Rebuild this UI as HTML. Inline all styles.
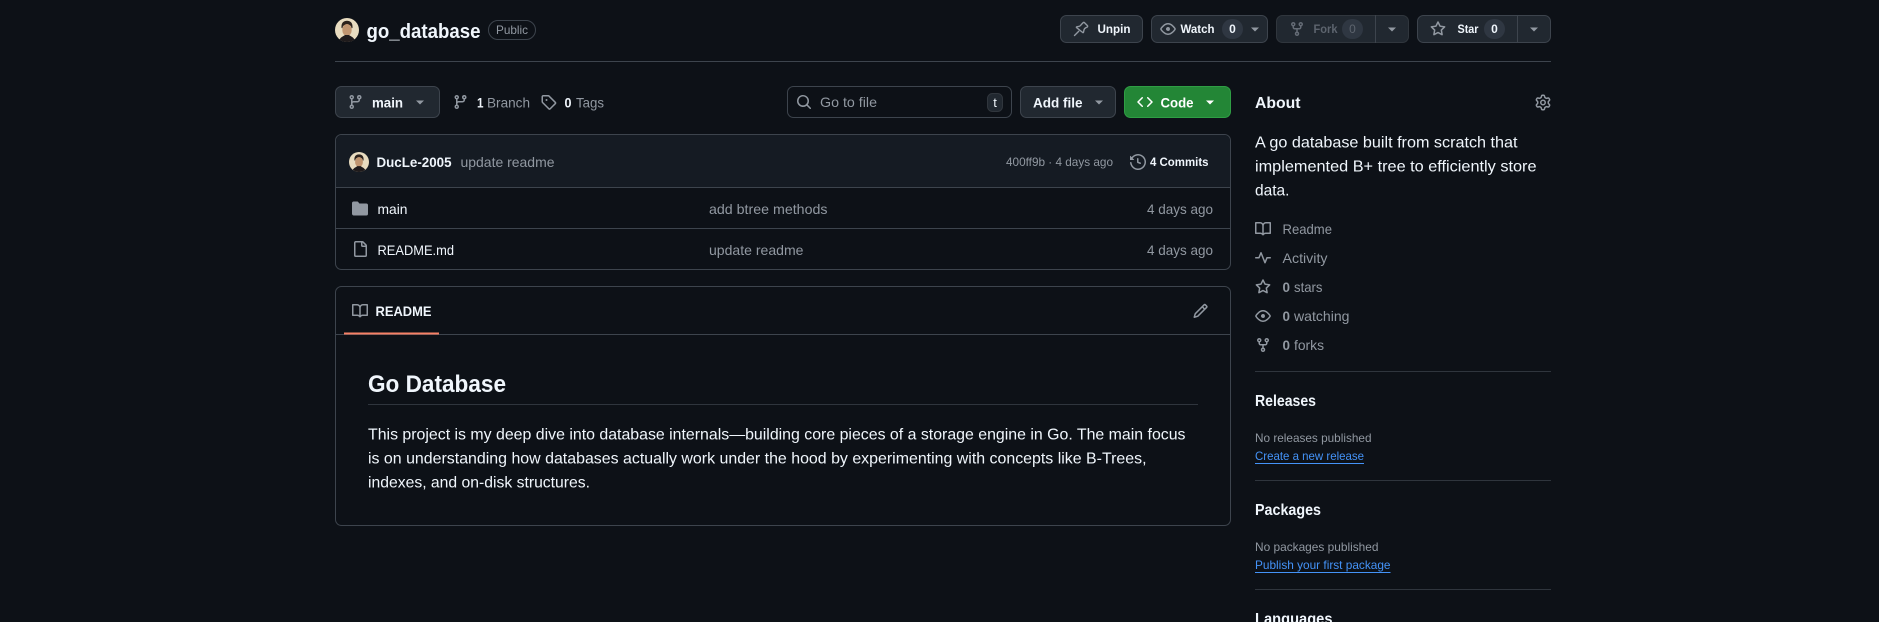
<!DOCTYPE html>
<html><head><meta charset="utf-8"><title>go_database</title>
<style>
html,body{margin:0;padding:0;background:#0d1117;width:1879px;height:622px;overflow:hidden}
svg{display:block}
text{font-family:"Liberation Sans",sans-serif;font-size:14px;fill:#f0f6fc}
.b{font-weight:700}
.m{fill:#9198a1}
.s{font-size:12px}
.l{fill:#4493f8}
.i{fill:#9198a1}
.btn{fill:#212830;stroke:#3d444d}
.pill{fill:#2f3742}
.car{fill:#9198a1}
.hr{fill:#2f353d}
</style></head><body>
<svg xmlns="http://www.w3.org/2000/svg" width="1879" height="622" viewBox="0 0 1879 622">
<defs>
<path id="branch" d="M9.5 3.25a2.25 2.25 0 1 1 3 2.122V6A2.5 2.5 0 0 1 10 8.5H6a1 1 0 0 0-1 1v1.128a2.251 2.251 0 1 1-1.5 0V5.372a2.25 2.25 0 1 1 1.5 0v1.836A2.493 2.493 0 0 1 6 7h4a1 1 0 0 0 1-1v-.628A2.25 2.25 0 0 1 9.5 3.25Zm-6 0a.75.75 0 1 0 1.5 0 .75.75 0 0 0-1.5 0Zm8.25-.75a.75.75 0 1 0 0 1.5.75.75 0 0 0 0-1.5ZM4.25 12a.75.75 0 1 0 0 1.5.75.75 0 0 0 0-1.5Z"/>
<path id="eye" d="M8 2c1.981 0 3.671.992 4.933 2.078 1.27 1.091 2.187 2.345 2.637 3.023a1.62 1.62 0 0 1 0 1.798c-.45.678-1.367 1.932-2.637 3.023C11.67 13.008 9.981 14 8 14c-1.981 0-3.671-.992-4.933-2.078C1.797 10.83.88 9.576.43 8.898a1.62 1.62 0 0 1 0-1.798c.45-.677 1.367-1.931 2.637-3.022C4.33 2.992 6.019 2 8 2ZM1.679 7.932a.12.12 0 0 0 0 .136c.411.622 1.241 1.75 2.366 2.717C5.176 11.758 6.527 12.5 8 12.5c1.473 0 2.825-.742 3.955-1.715 1.124-.967 1.954-2.096 2.366-2.717a.12.12 0 0 0 0-.136c-.412-.621-1.242-1.75-2.366-2.717C10.824 4.242 9.473 3.5 8 3.5c-1.473 0-2.825.742-3.955 1.715-1.124.967-1.954 2.096-2.366 2.717ZM8 10a2 2 0 1 1-.001-3.999A2 2 0 0 1 8 10Z"/>
<path id="fork" d="M5 5.372v.878c0 .414.336.75.75.75h4.5a.75.75 0 0 0 .75-.75v-.878a2.25 2.25 0 1 1 1.5 0v.878a2.25 2.25 0 0 1-2.25 2.25h-1.5v2.128a2.251 2.251 0 1 1-1.5 0V8.5h-1.5A2.25 2.25 0 0 1 3.5 6.25v-.878a2.25 2.25 0 1 1 1.5 0ZM5 3.25a.75.75 0 1 0-1.5 0 .75.75 0 0 0 1.5 0Zm6.75.75a.75.75 0 1 0 0-1.5.75.75 0 0 0 0 1.5Zm-3 8.75a.75.75 0 1 0-1.5 0 .75.75 0 0 0 1.5 0Z"/>
<path id="star" d="M8 .25a.75.75 0 0 1 .673.418l1.882 3.815 4.21.612a.75.75 0 0 1 .416 1.279l-3.046 2.97.719 4.192a.751.751 0 0 1-1.088.791L8 12.347l-3.766 1.98a.75.75 0 0 1-1.088-.79l.72-4.194L.818 6.374a.75.75 0 0 1 .416-1.28l4.21-.611L7.327.668A.75.75 0 0 1 8 .25Zm0 2.445L6.615 5.5a.75.75 0 0 1-.564.41l-3.097.45 2.24 2.184a.75.75 0 0 1 .216.664l-.528 3.084 2.769-1.456a.75.75 0 0 1 .698 0l2.77 1.456-.53-3.084a.75.75 0 0 1 .216-.664l2.24-2.183-3.096-.45a.75.75 0 0 1-.564-.41L8 2.694Z"/>
<path id="book" d="M0 1.75A.75.75 0 0 1 .75 1h4.253c1.227 0 2.317.59 3 1.501A3.743 3.743 0 0 1 11.006 1h4.245a.75.75 0 0 1 .75.75v10.5a.75.75 0 0 1-.75.75h-4.507a2.25 2.25 0 0 0-1.591.659l-.622.621a.75.75 0 0 1-1.06 0l-.622-.621A2.25 2.25 0 0 0 5.258 13H.75a.75.75 0 0 1-.75-.75Zm7.251 10.324.004-5.073-.002-2.253A2.25 2.25 0 0 0 5.003 2.5H1.5v9h3.757a3.75 3.75 0 0 1 1.994.574ZM8.755 4.75l-.004 7.322a3.752 3.752 0 0 1 1.992-.572H14.5v-9h-3.495a2.25 2.25 0 0 0-2.25 2.25Z"/>
<g id="ava"><circle cx="12" cy="12" r="12" fill="#e8dcc0"/><path d="M6.5 10C6 4.5 9 2.8 12 2.8s6 1.7 5.5 7.2l-1 .3c0-2-1-3.6-4.5-3.6S7.5 8.3 7.5 10.300Z" fill="#2c221c"/><ellipse cx="12" cy="12" rx="4.7" ry="6" fill="#c09570"/><path d="M4.5 21.5C6 18.8 9 18 10 17h4c1 1 4 1.8 5.5 4.500A12 12 0 0 1 12 24a12 12 0 0 1-7.5-2.500Z" fill="#1f1b1c"/></g>
</defs>

<!-- repo header -->
<use href="#ava" x="335" y="18"/>
<text x="366.500" y="38" class="b" style="font-size:20px" textLength="114" lengthAdjust="spacingAndGlyphs">go_database</text>
<rect x="488.500" y="20.500" width="47" height="19" rx="9.500" fill="none" stroke="#3d444d"/>
<text x="496" y="34" class="m s" textLength="32" lengthAdjust="spacingAndGlyphs">Public</text>

<rect x="1060.500" y="15.500" width="82" height="27" rx="6" class="btn"/>
<g transform="translate(1073,21)"><path d="M1.5 14.5 5.75 10.25M10.3 1.5a1 1 0 0 1 1.1.1l3 3a1 1 0 0 1-.2 1.5l-1.5.7a3 3 0 0 0-1.700 2l-.5 2.400a.5.5 0 0 1-.8.3L3.500 6.600a.5.5 0 0 1 .3-.8l2.400-.5a3 3 0 0 0 2-1.700Z" fill="none" stroke="#9198a1" stroke-width="1.400" stroke-linecap="round" stroke-linejoin="round"/></g>
<text x="1097.500" y="33" class="b s" textLength="33" lengthAdjust="spacingAndGlyphs">Unpin</text>

<rect x="1151.500" y="15.500" width="116" height="27" rx="6" class="btn"/>
<use href="#eye" x="1160" y="21" class="i"/>
<text x="1180.500" y="33" class="b s" textLength="34" lengthAdjust="spacingAndGlyphs">Watch</text>
<rect x="1222" y="19" width="21" height="20" rx="10" class="pill"/>
<text x="1232.500" y="33" class="b s" text-anchor="middle">0</text>
<path d="M1251 27.500h8l-4 4Z" class="car"/>

<rect x="1276.500" y="15.500" width="132" height="27" rx="6" fill="#212830" stroke="#30363d"/>
<rect x="1375" y="15" width="1" height="28" fill="#3d444d"/>
<use href="#fork" x="1289" y="21" fill="#656c76"/>
<text x="1313.500" y="33" class="b s" style="fill:#5d646e" textLength="24" lengthAdjust="spacingAndGlyphs">Fork</text>
<rect x="1342" y="19" width="21" height="20" rx="10" class="pill"/>
<text x="1352.500" y="33" class="s" style="fill:#5d646e" text-anchor="middle">0</text>
<path d="M1388 27.500h8l-4 4Z" class="car"/>

<rect x="1417.500" y="15.500" width="133" height="27" rx="6" class="btn"/>
<rect x="1517" y="15" width="1" height="28" fill="#3d444d"/>
<use href="#star" x="1430" y="21" class="i"/>
<text x="1457.500" y="33" class="b s" textLength="21" lengthAdjust="spacingAndGlyphs">Star</text>
<rect x="1484" y="19" width="21" height="20" rx="10" class="pill"/>
<text x="1494.500" y="33" class="b s" text-anchor="middle">0</text>
<path d="M1530 27.500h8l-4 4Z" class="car"/>

<rect x="335" y="61" width="1216" height="1" fill="#3d444d"/>

<!-- toolbar -->
<rect x="335.500" y="86.500" width="104" height="31" rx="6" class="btn"/>
<use href="#branch" x="347.500" y="94" class="i"/>
<text x="372" y="107.500" class="b" textLength="31" lengthAdjust="spacingAndGlyphs">main</text>
<path d="M416 100.500h8l-4 4Z" class="car"/>
<use href="#branch" x="452.500" y="94" class="i"/>
<text x="477" y="107.500" class="b" textLength="6.500" lengthAdjust="spacingAndGlyphs">1</text>
<text x="487" y="107.500" class="m" textLength="43" lengthAdjust="spacingAndGlyphs">Branch</text>
<g transform="translate(540.500,94)"><path d="M1 7.775V2.75C1 1.784 1.784 1 2.75 1h5.025c.464 0 .91.184 1.238.513l6.25 6.25a1.75 1.75 0 0 1 0 2.474l-5.026 5.026a1.75 1.75 0 0 1-2.474 0l-6.25-6.25A1.752 1.752 0 0 1 1 7.775Zm1.5 0c0 .066.026.13.073.177l6.25 6.25a.25.25 0 0 0 .354 0l5.025-5.025a.25.25 0 0 0 0-.354l-6.25-6.25a.25.25 0 0 0-.177-.073H2.75a.25.25 0 0 0-.25.25ZM6 5a1 1 0 1 1 0 2 1 1 0 0 1 0-2Z" class="i"/></g>
<text x="564.500" y="107.500" class="b" textLength="7" lengthAdjust="spacingAndGlyphs">0</text>
<text x="576" y="107.500" class="m" textLength="28" lengthAdjust="spacingAndGlyphs">Tags</text>

<rect x="787.500" y="86.500" width="224" height="31" rx="6" fill="#0d1117" stroke="#3d444d"/>
<g transform="translate(796,94)"><path d="M10.68 11.74a6 6 0 0 1-7.922-8.982 6 6 0 0 1 8.982 7.922l3.04 3.04a.749.749 0 0 1-.326 1.275.749.749 0 0 1-.734-.215ZM11.5 7a4.499 4.499 0 1 0-8.997 0A4.499 4.499 0 0 0 11.5 7Z" class="i"/></g>
<text x="820" y="107" class="m" textLength="57" lengthAdjust="spacingAndGlyphs">Go to file</text>
<rect x="987.500" y="93.500" width="15" height="18" rx="5" fill="#212830" stroke="#30363d"/>
<text x="995" y="107" style="font-size:13px" text-anchor="middle">t</text>

<rect x="1020.500" y="86.500" width="95" height="31" rx="6" class="btn"/>
<text x="1033" y="107.500" class="b" textLength="49.500" lengthAdjust="spacingAndGlyphs">Add file</text>
<path d="M1095 100.500h8l-4 4Z" class="car"/>

<rect x="1124.500" y="86.500" width="106" height="31" rx="6" fill="#238636" stroke="#2f9e44"/>
<g transform="translate(1137,94)"><path d="m11.28 3.22 4.25 4.25a.75.75 0 0 1 0 1.06l-4.25 4.25a.749.749 0 0 1-1.275-.326.749.749 0 0 1 .215-.734L13.94 8l-3.72-3.72a.749.749 0 0 1 .326-1.275.749.749 0 0 1 .734.215Zm-6.56 0a.751.751 0 0 1 1.042.018.751.751 0 0 1 .018 1.042L2.06 8l3.72 3.72a.749.749 0 0 1-.326 1.275.749.749 0 0 1-.734-.215L.47 8.53a.75.75 0 0 1 0-1.06Z" fill="#fff"/></g>
<text x="1160.500" y="107.500" class="b" style="fill:#fff" textLength="33" lengthAdjust="spacingAndGlyphs">Code</text>
<path d="M1206 100.500h8l-4 4Z" fill="#fff"/>

<!-- file table -->
<rect x="335.500" y="134.500" width="895" height="135" rx="6" fill="#0d1117" stroke="#3d444d"/>
<path d="M336 187V141a6 6 0 0 1 6-6H1224a6 6 0 0 1 6 6V187Z" fill="#151b23"/>
<rect x="335" y="187" width="896" height="1" fill="#3d444d"/>
<rect x="335" y="228" width="896" height="1" fill="#3d444d"/>
<g transform="translate(349,152) scale(.8333)"><use href="#ava"/></g>
<text x="376.500" y="167" class="b" textLength="75" lengthAdjust="spacingAndGlyphs">DucLe-2005</text>
<text x="460.500" y="167" class="m" textLength="94" lengthAdjust="spacingAndGlyphs">update readme</text>
<text x="1006" y="166" class="m s" textLength="107" lengthAdjust="spacingAndGlyphs">400ff9b · 4 days ago</text>
<g transform="translate(1130,154)"><path d="m.427 1.927 1.215 1.215a8.002 8.002 0 1 1-1.6 5.685.75.75 0 1 1 1.493-.154 6.5 6.5 0 1 0 1.18-4.458l1.358 1.358A.25.25 0 0 1 3.896 6H.25A.25.25 0 0 1 0 5.75V2.104a.25.25 0 0 1 .427-.177ZM7.75 4a.75.75 0 0 1 .75.75v2.992l2.028.812a.75.75 0 0 1-.557 1.392l-2.5-1A.751.751 0 0 1 7 8.25v-3.5A.75.75 0 0 1 7.75 4Z" class="i"/></g>
<text x="1150" y="166" class="b s" textLength="58.500" lengthAdjust="spacingAndGlyphs">4 Commits</text>

<g transform="translate(352,200.500)"><path d="M1.75 1A1.75 1.75 0 0 0 0 2.75v10.5C0 14.216.784 15 1.75 15h12.5A1.75 1.75 0 0 0 16 13.25v-8.5A1.75 1.75 0 0 0 14.25 3H7.5a.25.25 0 0 1-.2-.1l-.9-1.2C6.07 1.26 5.55 1 5 1H1.75Z" class="i"/></g>
<text x="377.500" y="214" textLength="30" lengthAdjust="spacingAndGlyphs">main</text>
<text x="709" y="214" class="m" textLength="118.500" lengthAdjust="spacingAndGlyphs">add btree methods</text>
<text x="1147" y="214" class="m" textLength="66" lengthAdjust="spacingAndGlyphs">4 days ago</text>

<g transform="translate(352,241)"><path d="M2 1.75C2 .784 2.784 0 3.75 0h6.586c.464 0 .909.184 1.237.513l2.914 2.914c.329.328.513.773.513 1.237v9.586A1.75 1.75 0 0 1 13.25 16h-9.5A1.75 1.75 0 0 1 2 14.25Zm1.75-.25a.25.25 0 0 0-.25.25v12.5c0 .138.112.25.25.25h9.5a.25.25 0 0 0 .25-.25V6h-2.75A1.75 1.75 0 0 1 9 4.25V1.5Zm6.75.062V4.25c0 .138.112.25.25.25h2.688l-.011-.013-2.914-2.914-.013-.011Z" class="i"/></g>
<text x="377.500" y="255" textLength="76.500" lengthAdjust="spacingAndGlyphs">README.md</text>
<text x="709" y="255" class="m" textLength="94.500" lengthAdjust="spacingAndGlyphs">update readme</text>
<text x="1147" y="255" class="m" textLength="66" lengthAdjust="spacingAndGlyphs">4 days ago</text>

<!-- readme -->
<rect x="335.500" y="286.500" width="895" height="239" rx="6" fill="#0d1117" stroke="#3d444d"/>
<rect x="335" y="334" width="896" height="1" fill="#3d444d"/>
<rect x="344" y="332.500" width="95" height="2" fill="#f78166"/>
<use href="#book" x="352" y="303" class="i"/>
<text x="375.500" y="316" class="b" textLength="56" lengthAdjust="spacingAndGlyphs">README</text>
<g transform="translate(1192.500,303)"><path d="M11.013 1.427a1.75 1.75 0 0 1 2.474 0l1.086 1.086a1.75 1.75 0 0 1 0 2.474l-8.61 8.61c-.21.21-.47.364-.756.445l-3.251.93a.75.75 0 0 1-.927-.928l.929-3.25c.081-.286.235-.547.445-.758l8.61-8.61Zm.176 4.823L9.75 4.81l-6.286 6.287a.253.253 0 0 0-.064.108l-.558 1.953 1.953-.558a.253.253 0 0 0 .108-.064Zm1.238-3.763a.25.25 0 0 0-.354 0L10.811 3.75l1.439 1.44 1.263-1.263a.25.25 0 0 0 0-.354Z" class="i"/></g>
<text x="368" y="392" class="b" style="font-size:24px" textLength="138" lengthAdjust="spacingAndGlyphs">Go Database</text>
<rect x="368" y="404" width="830" height="1" fill="#2f353d"/>
<text x="368" y="439.500" style="font-size:16px" textLength="817.500" lengthAdjust="spacingAndGlyphs">This project is my deep dive into database internals—building core pieces of a storage engine in Go. The main focus</text>
<text x="368" y="463.500" style="font-size:16px" textLength="778.500" lengthAdjust="spacingAndGlyphs">is on understanding how databases actually work under the hood by experimenting with concepts like B-Trees,</text>
<text x="368" y="487.500" style="font-size:16px" textLength="222" lengthAdjust="spacingAndGlyphs">indexes, and on-disk structures.</text>

<!-- sidebar -->
<text x="1255" y="108" class="b" style="font-size:16px" textLength="45.500" lengthAdjust="spacingAndGlyphs">About</text>
<g transform="translate(1535,94.500)"><path d="M8 0a8.2 8.2 0 0 1 .701.031C9.444.095 9.99.645 10.16 1.29l.288 1.107c.018.066.079.158.212.224.231.114.454.243.668.386.123.082.233.09.299.071l1.103-.303c.644-.176 1.392.021 1.82.63.27.385.506.792.704 1.218.315.675.111 1.422-.364 1.891l-.814.806c-.049.048-.098.147-.088.294.016.257.016.515 0 .772-.01.147.038.246.088.294l.814.806c.475.469.679 1.216.364 1.891a7.977 7.977 0 0 1-.704 1.217c-.428.61-1.176.807-1.82.63l-1.102-.302c-.067-.019-.177-.011-.3.071a5.909 5.909 0 0 1-.668.386c-.133.066-.194.158-.211.224l-.29 1.106c-.168.646-.715 1.196-1.458 1.26a8.006 8.006 0 0 1-1.402 0c-.743-.064-1.289-.614-1.458-1.26l-.289-1.106c-.018-.066-.079-.158-.212-.224a5.738 5.738 0 0 1-.668-.386c-.123-.082-.233-.09-.299-.071l-1.103.303c-.644.176-1.392-.021-1.82-.63a8.12 8.12 0 0 1-.704-1.218c-.315-.675-.111-1.422.363-1.891l.815-.806c.05-.048.098-.147.088-.294a6.214 6.214 0 0 1 0-.772c.01-.147-.038-.246-.088-.294l-.815-.806C.635 6.045.431 5.298.746 4.623a7.92 7.92 0 0 1 .704-1.217c.428-.61 1.176-.807 1.82-.63l1.102.302c.067.019.177.011.3-.071.214-.143.437-.272.668-.386.133-.066.194-.158.211-.224l.29-1.106C6.009.645 6.556.095 7.299.03 7.53.01 7.764 0 8 0Zm-.571 1.525c-.036.003-.108.036-.137.146l-.289 1.105c-.147.561-.549.967-.998 1.189-.173.086-.34.183-.5.29-.417.278-.97.423-1.529.27l-1.103-.303c-.109-.03-.175.016-.195.045-.22.312-.412.644-.573.99-.014.031-.021.11.059.19l.815.806c.411.406.562.957.53 1.456a4.709 4.709 0 0 0 0 .582c.032.499-.119 1.05-.53 1.456l-.815.806c-.081.08-.073.159-.059.19.162.346.353.677.573.989.02.03.085.076.195.046l1.102-.303c.56-.153 1.113-.008 1.53.27.161.107.328.204.501.29.447.222.85.629.997 1.189l.289 1.105c.029.109.101.143.137.146a6.6 6.6 0 0 0 1.142 0c.036-.003.108-.036.137-.146l.289-1.105c.147-.561.549-.967.998-1.189.173-.086.34-.183.5-.29.417-.278.97-.423 1.529-.27l1.103.303c.109.029.175-.016.195-.045.22-.313.411-.644.573-.99.014-.031.021-.11-.059-.19l-.815-.806c-.411-.406-.562-.957-.53-1.456a4.709 4.709 0 0 0 0-.582c-.032-.499.119-1.05.53-1.456l.815-.806c.081-.08.073-.159.059-.19a6.464 6.464 0 0 0-.573-.989c-.02-.03-.085-.076-.195-.046l-1.102.303c-.56.153-1.113.008-1.53-.27a4.44 4.44 0 0 0-.501-.29c-.447-.222-.85-.629-.997-1.189l-.289-1.105c-.029-.11-.101-.143-.137-.146a6.6 6.6 0 0 0-1.142 0ZM11 8a3 3 0 1 1-6 0 3 3 0 0 1 6 0ZM9.5 8a1.5 1.5 0 1 0-3.001.001A1.5 1.5 0 0 0 9.5 8Z" class="i"/></g>
<text x="1255" y="147.500" style="font-size:16px" textLength="262.500" lengthAdjust="spacingAndGlyphs">A go database built from scratch that</text>
<text x="1255" y="171.500" style="font-size:16px" textLength="281.500" lengthAdjust="spacingAndGlyphs">implemented B+ tree to efficiently store</text>
<text x="1255" y="195.500" style="font-size:16px" textLength="34.500" lengthAdjust="spacingAndGlyphs">data.</text>

<use href="#book" x="1255" y="221" class="i"/>
<text x="1282.500" y="234" class="m" textLength="49.500" lengthAdjust="spacingAndGlyphs">Readme</text>
<g transform="translate(1255,250)"><path d="M6 2c.306 0 .582.187.696.471L10 10.731l1.304-3.26A.751.751 0 0 1 12 7h3.25a.75.75 0 0 1 0 1.5h-2.742l-1.812 4.528a.751.751 0 0 1-1.392 0L6 4.77 4.696 8.03A.75.75 0 0 1 4 8.5H.75a.75.75 0 0 1 0-1.5h2.742l1.812-4.529A.751.751 0 0 1 6 2Z" class="i"/></g>
<text x="1282.500" y="263" class="m" textLength="45" lengthAdjust="spacingAndGlyphs">Activity</text>
<use href="#star" x="1255" y="279" class="i"/>
<text x="1282.500" y="292" class="m b" textLength="7.500" lengthAdjust="spacingAndGlyphs">0</text>
<text x="1294" y="292" class="m" textLength="28.500" lengthAdjust="spacingAndGlyphs">stars</text>
<use href="#eye" x="1255" y="308" class="i"/>
<text x="1282.500" y="321" class="m b" textLength="7.500" lengthAdjust="spacingAndGlyphs">0</text>
<text x="1294" y="321" class="m" textLength="55.500" lengthAdjust="spacingAndGlyphs">watching</text>
<use href="#fork" x="1255" y="337" class="i"/>
<text x="1282.500" y="350" class="m b" textLength="7.500" lengthAdjust="spacingAndGlyphs">0</text>
<text x="1294" y="350" class="m" textLength="30" lengthAdjust="spacingAndGlyphs">forks</text>

<rect x="1255" y="371" width="296" height="1" class="hr"/>
<text x="1255" y="406" class="b" style="font-size:16px" textLength="61" lengthAdjust="spacingAndGlyphs">Releases</text>
<text x="1255" y="442" class="m s" textLength="116.500" lengthAdjust="spacingAndGlyphs">No releases published</text>
<text x="1255" y="460" class="l s" textLength="109" lengthAdjust="spacingAndGlyphs">Create a new release</text>
<rect x="1255" y="463" width="109" height="1" fill="#4493f8"/>
<rect x="1255" y="480" width="296" height="1" class="hr"/>
<text x="1255" y="515" class="b" style="font-size:16px" textLength="66" lengthAdjust="spacingAndGlyphs">Packages</text>
<text x="1255" y="551" class="m s" textLength="123.500" lengthAdjust="spacingAndGlyphs">No packages published</text>
<text x="1255" y="569" class="l s" textLength="135.500" lengthAdjust="spacingAndGlyphs">Publish your first package</text>
<rect x="1255" y="572" width="135.500" height="1" fill="#4493f8"/>
<rect x="1255" y="589" width="296" height="1" class="hr"/>
<text x="1255" y="624" class="b" style="font-size:16px" textLength="77.500" lengthAdjust="spacingAndGlyphs">Languages</text>
</svg>
</body></html>
